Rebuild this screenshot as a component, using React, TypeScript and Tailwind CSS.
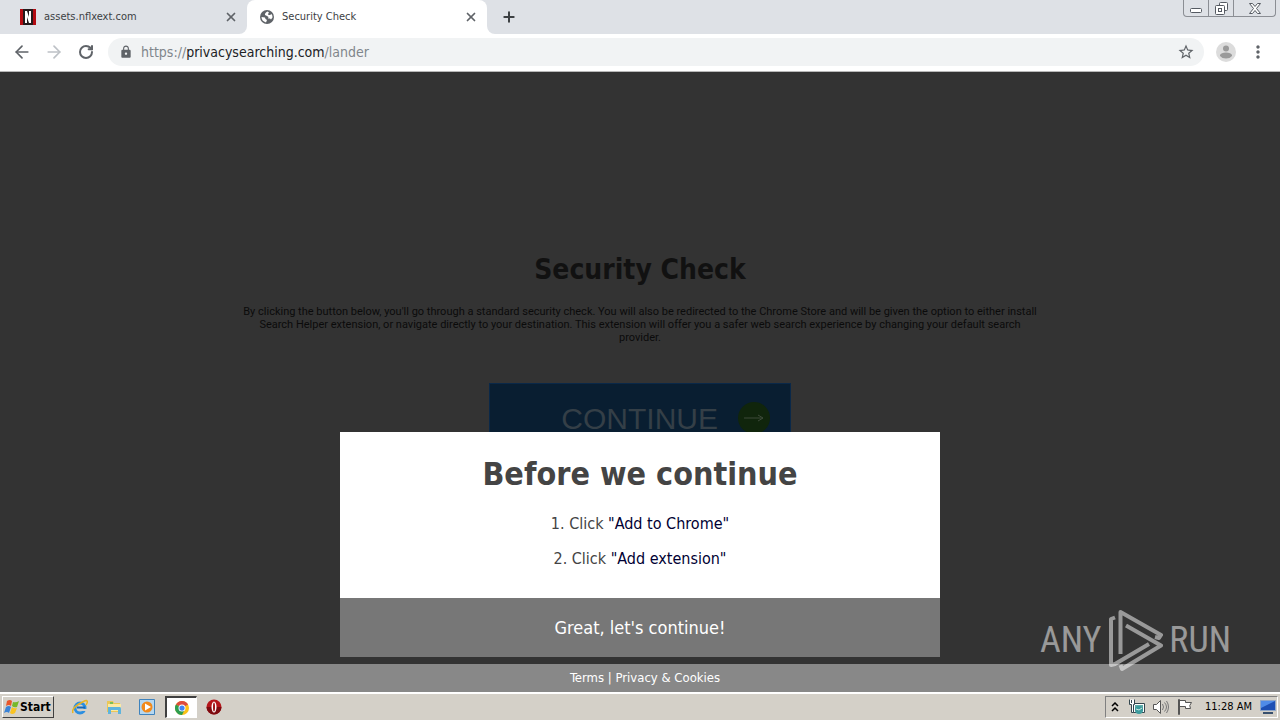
import { ArrowLeft, ArrowRight, Plus, RotateCw, X } from "lucide-react";
import type { ReactNode } from "react";
import { MdLock, MdMoreVert, MdStarBorder } from "react-icons/md";

function NetflixIcon() {
  return (
    <svg viewBox="0 0 16 16" className="h-4 w-4 shrink-0">
      <path fill="#b30b12" d="M0 0h16v16H0z" />
      <path fill="#241a1b" d="M3 0h10v16H3z" />
      <path fill="#fff" d="M5 2h2l2 6V2h2v12H9L7 8v6H5z" />
    </svg>
  );
}

function GlobeIcon() {
  return (
    <svg viewBox="0 0 14 14" className="h-[14px] w-[14px] shrink-0">
      <circle cx="7" cy="7" r="7" fill="#5f6368" />
      <path
        fill="#fff"
        d="M7.500 1.500Q4.500 3 5 5l2 1 1.500 1-.5 1.500h2l1 1 1.500-2q.3-2-1-3.500L10 5H8.500L8 4l1-1.500zM1.500 7q0 4 4.500 5.500l1-2.500-1.500-1L5 7.500z"
      />
    </svg>
  );
}

function ProfileIcon() {
  return (
    <svg viewBox="0 0 20 20" className="h-5 w-5">
      <circle cx="10" cy="10" r="10" fill="#dcdcdc" />
      <circle cx="10" cy="6.500" r="3" fill="#9a9a9a" />
      <path fill="#9a9a9a" d="M4 13q1-2.500 6-2.500t6 2.500v1q-2 2.500-6 2.500T4 14z" />
    </svg>
  );
}

function Tab({
  title,
  icon,
  active,
}: {
  title: string;
  icon: ReactNode;
  active?: boolean;
}) {
  return (
    <div
      className={`flex h-full items-center gap-2 pr-2 ${
        active
          ? "w-60 rounded-t-lg bg-white pl-[13px]"
          : "w-[247px] rounded-br-lg bg-[#dee1e6] pl-5"
      }`}
    >
      {icon}
      <span className="flex-1 truncate text-[11px] text-[#3c4043]">{title}</span>
      <button type="button" aria-label={`Close ${title}`} className="p-px text-[#5f6368]">
        <X size={14} strokeWidth={3} />
      </button>
    </div>
  );
}

function WindowControls() {
  return (
    <div className="mr-1 ml-auto flex h-[17px] self-start rounded-b border border-t-0 border-[#8b8e94] text-[#555a62]">
      <button type="button" aria-label="Minimize" className="flex w-6 items-end justify-center pb-[3px]">
        <svg viewBox="0 0 12 5" className="h-[5px] w-3" fill="#fff" stroke="currentColor">
          <rect x=".5" y=".5" width="11" height="4" rx="1" />
        </svg>
      </button>
      <button type="button" aria-label="Restore" className="flex w-[26px] items-center justify-center border-x border-[#8b8e94]">
        <svg viewBox="0 0 13 13" className="h-[13px] w-[13px]" fill="#fff" stroke="currentColor">
          <rect x="4.500" y=".5" width="8" height="8" rx="1" />
          <rect x=".5" y="3.500" width="9" height="9" rx="1" />
          <rect x="3.500" y="6.500" width="3" height="3" />
        </svg>
      </button>
      <button type="button" aria-label="Close window" className="flex w-[41px] items-center justify-center">
        <svg viewBox="0 0 12 11" className="h-[11px] w-3" fill="#fff" stroke="currentColor">
          <path d="M.5.5h3L6 3.500 8.500.5h3l-4 5 4 5h-3L6 7.500 3.500 10.500h-3l4-5z" />
        </svg>
      </button>
    </div>
  );
}

function BrowserChrome() {
  return (
    <header>
      <div className="flex h-[34px] bg-white">
        <Tab title="assets.nflxext.com" icon={<NetflixIcon />} />
        <div className="flex bg-[#dee1e6]">
          <Tab title="Security Check" icon={<GlobeIcon />} active />
        </div>
        <div className="flex flex-1 items-center rounded-bl-lg bg-[#dee1e6]">
          <button type="button" aria-label="New tab" className="ml-[10px] p-1 text-[#3c4043]">
            <Plus size={16} strokeWidth={3} />
          </button>
          <WindowControls />
        </div>
      </div>
      <div className="flex h-[38px] items-center border-b border-[#b8b8b8] bg-white px-3 pb-px text-[#5f6368]">
        <button type="button" aria-label="Back">
          <ArrowLeft size={20} strokeWidth={2} />
        </button>
        <button type="button" aria-label="Forward" className="ml-3 text-[#bdc1c6]">
          <ArrowRight size={20} strokeWidth={2} />
        </button>
        <button type="button" aria-label="Reload" className="ml-[14px]">
          <RotateCw size={16} strokeWidth={3} />
        </button>
        <div className="ml-[14px] flex h-7 flex-1 items-center rounded-full bg-[#f1f3f4] pr-[9px] pl-[11px]">
          <MdLock size={14} />
          <a href="https://privacysearching.com/lander" className="ml-2 flex-1 text-[14px] text-[#80868b]">
            https://<span className="text-[#202124]">privacysearching.com</span>/lander
          </a>
          <button type="button" aria-label="Bookmark this page">
            <MdStarBorder size={18} />
          </button>
        </div>
        <button type="button" aria-label="Profile" className="ml-3">
          <ProfileIcon />
        </button>
        <button type="button" aria-label="Menu" className="ml-3">
          <MdMoreVert size={20} />
        </button>
      </div>
    </header>
  );
}

function Watermark() {
  return (
    <div className="pointer-events-none absolute right-[49px] bottom-5 flex items-center font-['Roboto_Condensed','Liberation_Sans_Narrow',sans-serif] text-[36px] leading-none text-white/50">
      <span>ANY</span>
      <svg
        viewBox="0 0 56 64"
        className="mr-[6px] ml-[6px] h-16 w-14"
        fill="none"
        stroke="currentColor"
        strokeWidth="4"
        strokeLinejoin="round"
      >
        <path d="M8 9.500 4 11v46l4-1 34-20" />
        <path d="M13.500 46V4L54 27l-2 3-4-1" />
        <path d="m19 17.500 35 20L15 61l-1.500-4" />
      </svg>
      <span>RUN</span>
    </div>
  );
}

function LanderPage() {
  return (
    <main className="relative flex flex-1 flex-col bg-[#333] text-center">
      <div className="flex flex-1 flex-col items-center px-60 pt-[179px]">
        <h1 className="text-[28px] leading-[38px] font-bold text-[#111]">Security Check</h1>
        <p className="mt-4 max-w-[800px] font-[Roboto,sans-serif] text-[11px] leading-[13px] text-[#0b0b0b]">
          By clicking the button below, you'll go through a standard security check. You will also be redirected to the Chrome Store and will be given the option to either install Search Helper extension, or navigate directly to your destination. This extension will offer you a safer web search experience by changing your default search provider.
        </p>
        <button
          type="button"
          className="mt-[39px] flex h-[70px] w-[302px] items-center justify-end gap-5 border border-[#0a2848] bg-[#091e31] pr-5 font-['Liberation_Sans',sans-serif] text-[30px] text-[#343f47]"
        >
          CONTINUE
          <span className="flex h-8 w-8 items-center justify-center rounded-full bg-[#10250c] text-[#3d4a39]">
            <svg viewBox="0 0 20 8" className="h-2 w-5" fill="none" stroke="currentColor">
              <path d="M0 4h19M14 1l5 3-5 3" />
            </svg>
          </span>
        </button>
      </div>

      <div className="absolute inset-x-0 bottom-[35px] flex justify-center">
        <div role="dialog" aria-labelledby="dialog-title" className="w-[600px] bg-white">
          <h2 id="dialog-title" className="pt-[22px] text-[32px] leading-10 font-bold text-[#444]">
            Before we continue
          </h2>
          <ol className="mt-[18px] flex flex-col gap-[11px] pb-[27px] text-[16px] leading-6 text-[#444]">
            <li>
              1. Click <span className="text-[#000033]">"Add to Chrome"</span>
            </li>
            <li>
              2. Click <span className="text-[#000033]">"Add extension"</span>
            </li>
          </ol>
          <button type="button" className="h-[59px] w-full bg-[#777] text-[18px] text-white">
            Great, let's continue!
          </button>
        </div>
      </div>

      <footer className="h-7 bg-[#888] pl-[10px] text-[13px] leading-7 text-white">
        <a href="#terms">Terms</a> | <a href="#privacy">Privacy &amp; Cookies</a>
      </footer>
      <Watermark />
    </main>
  );
}

function WindowsLogo() {
  return (
    <svg viewBox="0 0 16 16" className="h-4 w-4">
      <path fill="#e8562a" d="M3 2q3-2 5 0L7 7Q5 5 2 7z" />
      <path fill="#76b82a" d="M9 3q3 1 6-1l-2 6q-3 1-5-1z" />
      <path fill="#3a83d6" d="M2 8q3-2 5 0l-2 6q-2-2-5 0z" />
      <path fill="#f9c322" d="M8 8q2 2 5 1l-2 5q-3 2-5 0z" />
    </svg>
  );
}

function ExplorerIcon() {
  return (
    <svg viewBox="0 0 16 16" className="h-4 w-4">
      <circle cx="8" cy="9" r="5" fill="none" stroke="#2c8fe0" strokeWidth="3" />
      <path d="M5 8.500h8" stroke="#1668b8" strokeWidth="2" />
      <path d="M10 11h5" stroke="#d4d0c8" strokeWidth="2" />
      <path d="M1 14Q-1 10 7 5t8-3q1 1-1 4" fill="none" stroke="#e8b423" strokeWidth="1.500" />
    </svg>
  );
}

function FolderIcon() {
  return (
    <svg viewBox="0 0 16 16" className="h-4 w-4">
      <path fill="#e9c758" d="M1 2h6l1 2h6v9H1z" />
      <path fill="#fbe9a3" d="M2 5h13v7H2z" />
      <path fill="#5fb4dd" d="M2 8h12q1 0 1 2v5h-3v-4H5v4H2z" />
      <path fill="#7bbf57" d="M4 3h3v2H4z" />
    </svg>
  );
}

function MediaIcon() {
  return (
    <svg viewBox="0 0 16 16" className="h-4 w-4">
      <path fill="#b5d7f0" stroke="#3f83bd" d="M.5.500h15v15H.5z" />
      <circle cx="8" cy="8" r="5.500" fill="#f28a1b" />
      <path fill="#fff" d="m6 4.500 6 3.500-6 3.500z" />
    </svg>
  );
}

function ChromeIcon() {
  return (
    <svg viewBox="0 0 16 16" className="h-[14px] w-[14px]">
      <circle cx="8" cy="8" r="8" fill="#fbc116" />
      <path fill="#dd4b3e" d="M8 8 1.070 4A8 8 0 0 1 14.930 4z" />
      <path fill="#2d9d4f" d="M8 8 1.070 4A8 8 0 0 0 8 16l3-6z" />
      <circle cx="8" cy="8" r="4" fill="#fff" />
      <circle cx="8" cy="8" r="3" fill="#4284f3" />
    </svg>
  );
}

function OperaIcon() {
  return (
    <svg viewBox="0 0 16 16" className="h-4 w-4">
      <circle cx="8" cy="8" r="7.500" fill="#b5161b" />
      <path fill="#7d0b10" d="M8 15.500A7.500 7.500 0 0 0 15.500 8h-15A7.500 7.500 0 0 0 8 15.500" />
      <ellipse cx="8" cy="8" rx="2.500" ry="5.500" fill="#fff" />
      <ellipse cx="8" cy="8" rx="1" ry="4.500" fill="#a11317" />
    </svg>
  );
}

function SystemTray() {
  return (
    <div className="ml-auto flex h-[22px] items-center border border-t-[#808080] border-r-white border-b-white border-l-[#808080] pr-px pl-[5px]">
      <button type="button" aria-label="Show hidden icons">
        <svg viewBox="0 0 8 10" className="h-[10px] w-2" fill="none" stroke="#000" strokeWidth="1.500">
          <path d="m1 4 3-3 3 3M1 9l3-3 3 3" />
        </svg>
      </button>
      <svg viewBox="0 0 16 16" className="ml-[10px] h-4 w-4">
        <path fill="#fff" stroke="#34464e" d="M4.500 4.500h11v9h-11z" />
        <path fill="#5eaaa8" d="M6 6h8v6H6z" />
        <path fill="#fff" stroke="#34464e" d="M.5.500v5h2v8h2v-8h1v-5M2.500 1v3" />
        <circle cx="10" cy="11" r="4" fill="#3c9b9d" />
        <path d="m7 10 3 1 3-2" fill="none" stroke="#cfe9e2" />
      </svg>
      <svg viewBox="0 0 16 16" className="ml-2 h-4 w-4" fill="none" stroke="#777">
        <path fill="#fff" stroke="#555" d="M.5 5.500h3l4-4v13l-4-4h-3z" />
        <path d="M9.500 5q2 3 0 6M11.500 3.500q4 4.500 0 9M13.500 2q4 6 0 12" />
      </svg>
      <svg viewBox="0 0 16 16" className="ml-2 h-4 w-4" fill="#fff" stroke="#555">
        <path d="M1.500 15.500v-15h1v15zM2.500 1.500h6v2h6q-3 3-1 6h-5v-2h-6z" />
      </svg>
      <time className="ml-3 text-[11px]">11:28 AM</time>
      <svg viewBox="0 0 16 14" className="ml-2 h-[14px] w-4">
        <path fill="#1d4fb4" stroke="#8fa6c8" d="M.5.500h15v10H.5z" />
        <path fill="#4f8be8" d="M1 1h14L1 8z" />
        <path fill="#38506e" d="M3 12h10v2H3z" />
      </svg>
    </div>
  );
}

function Taskbar() {
  return (
    <nav aria-label="Taskbar" className="flex h-7 items-center border-t-2 border-t-white bg-[#d4d0c8] pr-[2px] pl-[2px] text-black">
      <button
        type="button"
        className="flex h-[22px] w-[52px] items-center border border-t-white border-r-[#404040] border-b-[#404040] border-l-white pl-px text-[12px] font-bold"
      >
        <WindowsLogo />
        Start
      </button>
      <div className="ml-[9px] flex items-center">
        <button type="button" aria-label="Internet Explorer" className="flex w-[34px] justify-center">
          <ExplorerIcon />
        </button>
        <button type="button" aria-label="Windows Explorer" className="flex w-[33px] justify-center">
          <FolderIcon />
        </button>
        <button type="button" aria-label="Media Player" className="flex w-[34px] justify-center">
          <MediaIcon />
        </button>
        <button
          type="button"
          aria-label="Google Chrome"
          className="ml-px flex h-[22px] w-8 items-center justify-center border-t-2 border-r border-b border-l-2 border-t-[#404040] border-r-white border-b-white border-l-[#404040] bg-white"
        >
          <ChromeIcon />
        </button>
        <button type="button" aria-label="Opera" className="flex w-[34px] justify-center">
          <OperaIcon />
        </button>
      </div>
      <SystemTray />
    </nav>
  );
}

export default function App() {
  return (
    <div className="flex min-h-screen flex-col bg-white font-[Tahoma,'DejaVu_Sans_Condensed','Noto_Sans',sans-serif]">
      <BrowserChrome />
      <LanderPage />
      <Taskbar />
    </div>
  );
}
